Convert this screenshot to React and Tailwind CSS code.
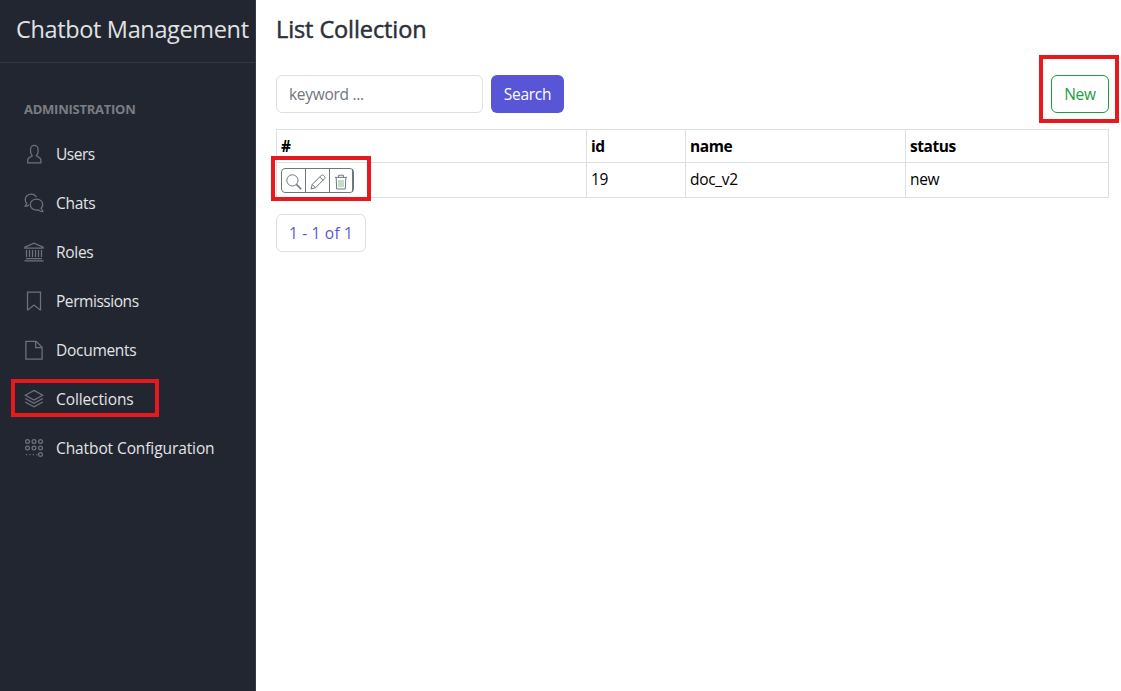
import React from 'react';

const Stroke = ({ children, className = 'size-5' }) => (
  <svg viewBox="0 0 20 20" className={className} fill="none" stroke="currentColor" strokeWidth="1.25">
    {children}
  </svg>
);

const USER_PATH =
  'M411.6,343.656l-72.823-47.334,27.455-50.334A80.23,80.23,0,0,0,376,207.681V128a112,112,0,0,0-224,0v79.681a80.236,80.236,0,0,0,9.768,38.308l27.455,50.333L116.4,343.656A79.725,79.725,0,0,0,80,410.732V496H448V410.732A79.727,79.727,0,0,0,411.6,343.656ZM416,464H112V410.732a47.836,47.836,0,0,1,21.841-40.246l97.66-63.479-41.64-76.341A48.146,48.146,0,0,1,184,207.681V128a80,80,0,0,1,160,0v79.681a48.146,48.146,0,0,1-5.861,22.985L296.5,307.007l97.662,63.479h0A47.836,47.836,0,0,1,416,410.732Z';

const UserIcon = () => (
  <svg viewBox="0 0 512 512" className="size-5" fill="currentColor">
    <path d={USER_PATH} />
  </svg>
);

const ChatIcon = () => (
  <Stroke>
    <path d="M12.4 4.2C11.5 2.3 9.4 1.2 7.1 1.2 3.7 1.2 1.2 3.6 1.2 6.7c0 1.5.6 2.8 1.6 3.8L1.2 12.9v.4c1.500 0 2.900-.4 3.900-1.200" />
    <path d="M12.500 6.100c3.500 0 6.200 2.300 6.200 5.300 0 1.600-.7 2.900-1.700 3.900l1.800 2.700v.7c-1.800 0-3.300-.7-4.300-1.800-.6.2-1.300.2-2 .2-3.500 0-6.200-2.500-6.200-5.600s2.700-5.400 6.200-5.400z" />
  </Stroke>
);

const InstitutionIcon = () => (
  <Stroke>
    <path d="M.9 6.100V5.200L10 1.200l9.100 4v.9zM2.500 8v7M5.500 8v7M8.500 8v7M11.500 8v7M14.500 8v7M17.500 8v7M2 16.500h16M.4 18.900h19.200" />
  </Stroke>
);

const BookmarkIcon = () => (
  <Stroke>
    <path d="M3.500 1.200h13v17.700h-.4L10 14l-6.100 4.900h-.4z" />
  </Stroke>
);

const FileIcon = () => (
  <Stroke>
    <path d="M1.900 1.300h10.300l5.900 5.900v11.900H1.900zM11.600 1.300v6.200h6.500" />
  </Stroke>
);

const LayersIcon = () => (
  <Stroke>
    <path d="M10 1.400l8.700 4.800L10 11 1.300 6.200zM1.100 9.500L10 14.300l8.900-4.800M1.100 13L10 17.900l8.900-4.900" />
  </Stroke>
);

const DialpadIcon = () => (
  <Stroke>
    {[3.500, 10, 16.500].map((x) => (
      <React.Fragment key={x}>
        <circle cx={x} cy="3.500" r="1.900" />
        <circle cx={x} cy="10" r="1.900" />
      </React.Fragment>
    ))}
    <circle cx="16.500" cy="16.500" r="1.900" />
    <path d="M2 16.500h1.200M5.400 16.500h1.200M8.800 16.500h1.200M12.200 16.500h1.200" />
  </Stroke>
);

const NAV = [
  { label: 'Users', Icon: UserIcon, track: 'tracking-[-0.5px]' },
  { label: 'Chats', Icon: ChatIcon, track: 'tracking-[-0.3px]' },
  { label: 'Roles', Icon: InstitutionIcon, track: 'tracking-[-0.3px]' },
  { label: 'Permissions', Icon: BookmarkIcon, track: 'tracking-[-0.45px]' },
  { label: 'Documents', Icon: FileIcon, track: 'tracking-[-0.28px]' },
  { label: 'Collections', Icon: LayersIcon, track: 'tracking-[-0.1px]', marked: true },
  { label: 'Chatbot Configuration', Icon: DialpadIcon, track: 'tracking-[-0.1px]' },
];

const Mark = ({ className }) => (
  <div className={`pointer-events-none absolute border-4 border-[#e8191c] ${className}`} />
);

function Sidebar() {
  return (
    <aside className="flex w-64 shrink-0 flex-col border-r border-[#323a49] bg-[#212631]">
      <div className="flex h-[63px] items-center border-b border-[#323a49] pb-0.5 pl-4">
        <span className="whitespace-nowrap text-[23.500px] tracking-[-0.35px] text-[#e1e2e4]">Chatbot Management</span>
      </div>
      <div className="pl-6 pt-9 text-[13px] font-bold leading-5 tracking-[-0.25px] text-[#7a7d83]">ADMINISTRATION</div>
      <nav className="flex flex-col pt-[11px]">
        {NAV.map(({ label, Icon, track, marked }) => (
          <a key={label} className="relative flex h-[49px] items-center gap-3 pl-6 text-[#6f727b]">
            <span className="pb-px"><Icon /></span>
            <span className={`text-[15.500px] text-[#e3e4e6] ${track}`}>{label}</span>
            {marked && <Mark className="left-[11px] top-[3.500px] h-[38px] w-[148px]" />}
          </a>
        ))}
      </nav>
    </aside>
  );
}

function RowActions() {
  return (
    <div className="relative flex h-[25px] w-[73px] divide-x divide-[#6b7785] rounded border border-[#6b7785] text-[#6b7785]">
      <button className="flex w-6 items-center justify-center pt-0.5">
        <Stroke className="size-4">
          <circle cx="8" cy="8" r="7" />
          <path d="M13 13l6 6" strokeWidth="2" />
        </Stroke>
      </button>
      <button className="flex w-6 items-center justify-center pt-0.5">
        <Stroke className="size-4">
          <path d="M1.300 18.700l1.500-5.700L14.300 1.500q1.200-.9 2.400.2l1.600 1.600q1 1.200 0 2.400L6.900 17.200zM12.200 3.600l4.200 4.200M2.800 13l4.100 4.200" />
        </Stroke>
      </button>
      <button className="flex flex-1 items-center justify-center pt-0.5">
        <Stroke className="size-4">
          <path d="M2.500 4.200h15M7 4V1.500h6V4M4 5l.6 13.700h10.800L16 5" />
          <path d="M7.500 7.500v9M12.500 7.500v9M10 7.500v9" stroke="#4fa45f" strokeWidth="0.9" />
        </Stroke>
      </button>
      <Mark className="-left-[11px] -top-[13px] h-[45px] w-[100px]" />
    </div>
  );
}

export default function App() {
  return (
    <div className="flex h-[691px] w-[1121px] overflow-hidden bg-white font-['Open_Sans',sans-serif]">
      <Sidebar />
      <main className="flex flex-1 flex-col pl-5 pr-3">
        <h1 className="flex h-[75px] items-start pt-[11px] text-[23.500px] font-medium leading-9 tracking-[-0.1px] text-[#2b303b] [-webkit-text-stroke:0.5px_#2b303b]">
          List Collection
        </h1>
        <div className="flex h-[38px] gap-2 text-[15.500px] tracking-[-0.3px]">
          <input
            placeholder="keyword ..."
            className="w-[207px] rounded-md border border-[#dbdfe6] px-3 pt-0.5 placeholder:text-[#70757e]"
          />
          <button className="w-[73px] rounded-md bg-[#5856d6] pt-0.5 text-white">Search</button>
          <div className="relative ml-auto flex">
            <button className="w-[58px] rounded-md border border-[#1b9e3e] pt-0.5 text-[#1b9e3e]">New</button>
            <Mark className="-left-3 -top-5 h-[68px] w-[80px]" />
          </div>
        </div>
        <table className="mt-4 w-[833px] table-fixed border-collapse text-left text-[15.500px] leading-6 tracking-[-0.3px] text-black">
          <colgroup>
            <col className="w-[310px]" />
            <col className="w-[99px]" />
            <col className="w-[220px]" />
            <col className="w-[203px]" />
          </colgroup>
          <thead>
            <tr className="h-[33px]">
              {['#', 'id', 'name', 'status'].map((h) => (
                <th key={h} className="border border-[#dbdfe6] px-1 py-0 font-bold tracking-[-0.45px]">{h}</th>
              ))}
            </tr>
          </thead>
          <tbody>
            <tr className="h-[35px]">
              <td className="border border-[#dbdfe6] px-1 py-0">
                <div className="pt-px"><RowActions /></div>
              </td>
              {['19', 'doc_v2', 'new'].map((v) => (
                <td key={v} className="border border-[#dbdfe6] px-1 pb-0.5 pt-0">{v}</td>
              ))}
            </tr>
          </tbody>
        </table>
        <button className="mt-4 h-[38px] w-[90px] rounded-md border border-[#dbdfe6] pt-0.5 text-[15.500px] tracking-[0.2px] text-[#5856d6]">
          1 - 1 of 1
        </button>
      </main>
    </div>
  );
}
